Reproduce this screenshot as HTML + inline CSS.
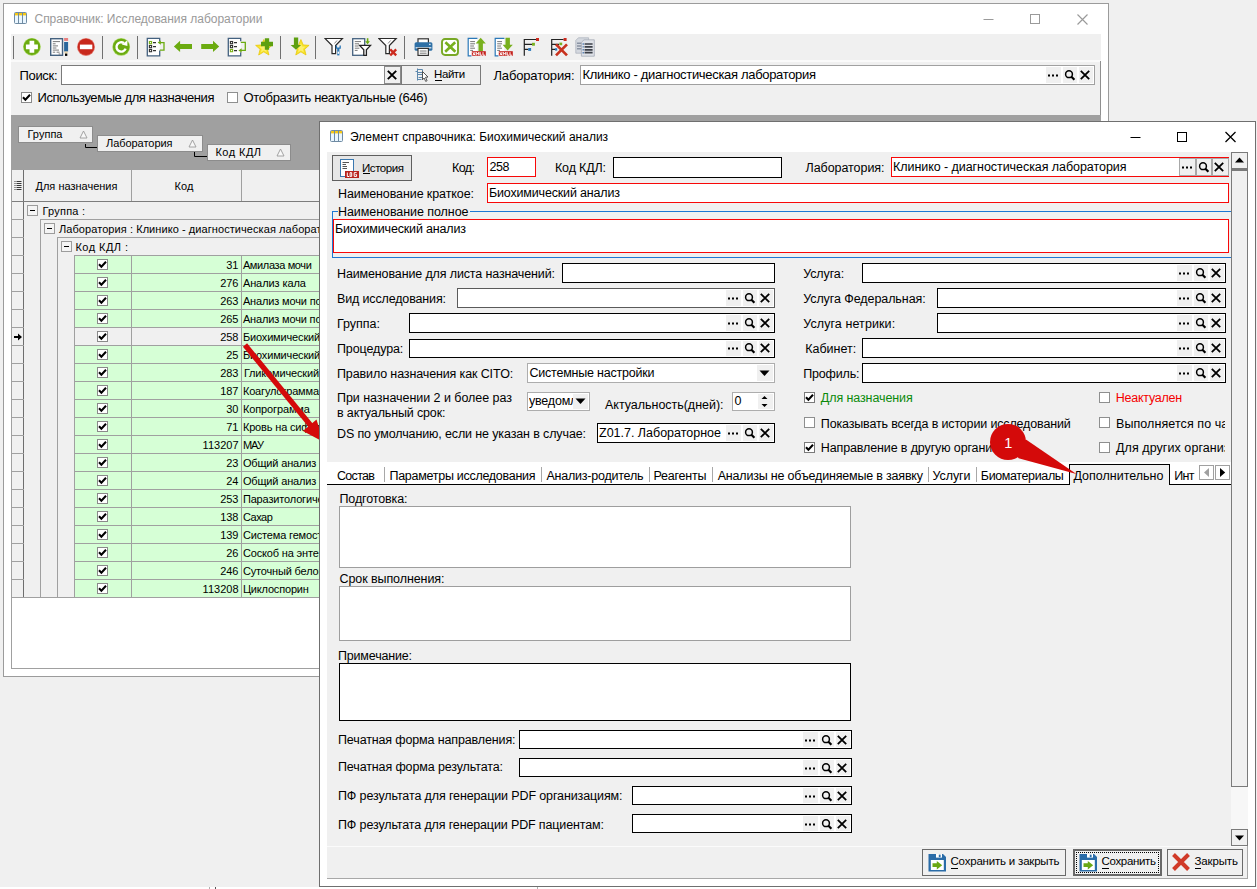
<!DOCTYPE html>
<html><head><meta charset="utf-8"><title>UI</title>
<style>
html,body{margin:0;padding:0;}
body{width:1257px;height:889px;overflow:hidden;background:#f0f0f0;font-family:"Liberation Sans",sans-serif;}
#root{position:relative;width:1257px;height:889px;overflow:hidden;background:#f0f0f0;}
#root div,#root span,#root svg{position:absolute;box-sizing:border-box;}
#root span{white-space:pre;}
#w1{left:0;top:0;width:1257px;height:889px;}
#w2{left:0;top:0;width:1257px;height:889px;}

</style></head>
<body>
<div id="root">
<div id="w1">
<div style="left:3px;top:3px;width:1106px;height:674px;background:#fff;border:1px solid #9b9b9b;"></div>
<div style="left:11px;top:34px;width:1090px;height:635px;background:#f0f0f0;"></div>
<svg style="left:14px;top:12px" width="13" height="12" viewBox="0 0 13 12">
<rect x="0.5" y="0.5" width="12" height="11" rx="1" fill="#eaf6ff" stroke="#6f8ba3"/>
<rect x="1" y="1" width="11" height="2.4" fill="#f7c815"/>
<path d="M4.5 0.5V11.5M8.5 0.5V11.5" stroke="#6f8ba3"/>
</svg>
<svg style="left:980px;top:10px" width="112" height="18" viewBox="0 0 112 18">
<g stroke="#9a9a9a" fill="none" stroke-width="1">
<path d="M3.5 9.5H13.5"/>
<rect x="50.5" y="4.5" width="9" height="9"/>
<path d="M97.5 4.5L107.5 14.5M107.5 4.5L97.5 14.5" stroke-width="1.15"/>
</g></svg>
<div style="left:13px;top:36px;width:1.2px;height:23px;background:#707070;"></div>
<div style="left:102px;top:36px;width:1.2px;height:23px;background:#707070;"></div>
<div style="left:137px;top:36px;width:1.2px;height:23px;background:#707070;"></div>
<div style="left:280px;top:36px;width:1.2px;height:23px;background:#707070;"></div>
<div style="left:315px;top:36px;width:1.2px;height:23px;background:#707070;"></div>
<div style="left:404px;top:36px;width:1.2px;height:23px;background:#707070;"></div>
<svg style="left:22px;top:37px" width="21" height="21" viewBox="0 0 21 21"><circle cx="9.9" cy="9.8" r="8.9" fill="#a4d45a"/><circle cx="9.9" cy="9.8" r="8.2" fill="#6bab10"/><path d="M9.9 3.8V15.8M3.9 9.8H15.9" stroke="#fff" stroke-width="4.7"/></svg>
<svg style="left:48.6px;top:37px" width="21" height="21" viewBox="0 0 21 21"><rect x="1.7" y="1.7" width="11.8" height="16.6" fill="#fff" stroke="#44617f" stroke-width="1.4"/><path d="M3.8 4.6H11M3.8 6.8H6.6M3.8 8.9H9M3.8 11H7.4M3.8 13.1H10M3.8 15.2H6.2M7.6 15.2H10.6M9.6 17H11.4" stroke="#6a6a6a" stroke-width="0.9"/><rect x="15.1" y="1" width="4" height="2.9" fill="#e87f7f"/><rect x="15.1" y="5" width="4" height="9.6" fill="#2b679c"/><path d="M15.1 14.6h4l-0.9 2.2h-2.2z" fill="#e8d3a8"/><rect x="16" y="16.6" width="2.3" height="2.3" fill="#000"/></svg>
<svg style="left:76px;top:37px" width="21" height="21" viewBox="0 0 21 21"><circle cx="10" cy="9.9" r="9" fill="#e2766c"/><circle cx="10" cy="9.9" r="8.2" fill="#c8281c"/><rect x="3.9" y="7.6" width="12.4" height="4.6" fill="#fff"/></svg>
<svg style="left:111px;top:37px" width="21" height="21" viewBox="0 0 21 21"><circle cx="10.2" cy="9.9" r="8.9" fill="#a4d45a"/><circle cx="10.2" cy="9.9" r="8.2" fill="#6bab10"/><path d="M14.6 11.6A4.7 4.7 0 1 1 12.9 6.1" stroke="#fff" stroke-width="2.4" fill="none"/><path d="M10.8 7.6l5.6 1.4V3.2z" fill="#fff"/></svg>
<svg style="left:146px;top:37px" width="21" height="21" viewBox="0 0 21 21"><rect x="1.3" y="1.4" width="12.4" height="17.4" fill="#fff"/><path d="M13.7 4.6V1.4H1.3v17.4h12.4v-5.2" fill="none" stroke="#44617f" stroke-width="1.3"/><path d="M7 5.6h3M7 9.6h3M7 13.6h3" stroke="#333" stroke-width="1.2"/><rect x="3.4" y="4.5" width="2.2" height="2.2" fill="#fff" stroke="#7ab317" stroke-width="1.1"/><rect x="3.4" y="8.5" width="2.2" height="2.2" fill="#fff" stroke="#333" stroke-width="1.1"/><rect x="3.4" y="12.5" width="2.2" height="2.2" fill="#fff" stroke="#333" stroke-width="1.1"/><path d="M13.8 13.2H18V5.6H14" stroke="#6bab10" fill="none" stroke-width="1.3"/><path d="M11.6 5.6l3.2-2.2v4.4z" fill="#6bab10"/></svg>
<svg style="left:173px;top:37px" width="21" height="21" viewBox="0 0 21 21"><path d="M0.9 9.4L7.1 3.7V6.9H19V11.9H7.1V15.1z" fill="#6bab10"/></svg>
<svg style="left:200px;top:37px" width="21" height="21" viewBox="0 0 21 21"><path d="M19.2 9.4L13 3.7V6.9H1.2V11.9H13V15.1z" fill="#6bab10"/></svg>
<svg style="left:226.8px;top:37px" width="21" height="21" viewBox="0 0 21 21"><rect x="1.3" y="1.4" width="12.4" height="17.4" fill="#fff"/><path d="M13.7 4.2V1.4H1.3v17.4h12.4v-3.6" fill="none" stroke="#44617f" stroke-width="1.3"/><path d="M7 5.6h3M7 9.6h3M7 13.6h3" stroke="#333" stroke-width="1.2"/><rect x="3.4" y="4.5" width="2.2" height="2.2" fill="#fff" stroke="#333" stroke-width="1.1"/><rect x="3.4" y="8.5" width="2.2" height="2.2" fill="#fff" stroke="#333" stroke-width="1.1"/><rect x="3.4" y="12.5" width="2.2" height="2.2" fill="#fff" stroke="#7ab317" stroke-width="1.1"/><path d="M13.8 5.4H18.3V13.4H14" stroke="#6bab10" fill="none" stroke-width="1.3"/><path d="M11.4 13.4l3.2-2.2v4.4z" fill="#6bab10"/></svg>
<svg style="left:254px;top:37px" width="21" height="21" viewBox="0 0 21 21"><path d="M0 -9.2L2.6 -3.2 9.1 -2.7 4.1 1.6 5.7 8 0 4.5 -5.7 8 -4.1 1.6 -9.1 -2.7 -2.6 -3.2z" transform="translate(9.8 10.8) scale(0.9)" fill="#f7e32a" stroke="#e8c400" stroke-width="0.8"/><path d="M0 -9.2L2.6 -3.2 9.1 -2.7 4.1 1.6 5.7 8 0 4.5 -5.7 8 -4.1 1.6 -9.1 -2.7 -2.6 -3.2z" transform="translate(9.8 11.2) scale(0.5)" fill="#fff58a" opacity="0.7"/><path d="M13 1.3V12.8M7 7H19" stroke="#5da011" stroke-width="4.3"/></svg>
<svg style="left:288.5px;top:37px" width="21" height="21" viewBox="0 0 21 21"><path d="M0 -9.2L2.6 -3.2 9.1 -2.7 4.1 1.6 5.7 8 0 4.5 -5.7 8 -4.1 1.6 -9.1 -2.7 -2.6 -3.2z" transform="translate(11.9 10.8) scale(0.9)" fill="#f7e32a" stroke="#e8c400" stroke-width="0.8"/><path d="M0 -9.2L2.6 -3.2 9.1 -2.7 4.1 1.6 5.7 8 0 4.5 -5.7 8 -4.1 1.6 -9.1 -2.7 -2.6 -3.2z" transform="translate(11.9 11.2) scale(0.5)" fill="#fff58a" opacity="0.7"/><path d="M4.9 0.6h4.3V8h2.9L7 12.8 1.6 8h3.3z" fill="#5da011"/></svg>
<svg style="left:324.4px;top:37px" width="21" height="21" viewBox="0 0 21 21"><path d="M1.4 1.5h17.4l-6.8 7V16.6h-3.6V8.5z" transform="translate(-0.4 0)" fill="#fff" stroke="#2a2a2a" stroke-width="1.2"/><path d="M13 3.5l-2.6 3" stroke="#888" stroke-width="1"/><path d="M14.3 11v7.4" stroke="#2b78b8" stroke-width="2.2"/><path d="M12.4 8.6v2.6h3.8V8.6" stroke="#2b78b8" fill="none" stroke-width="1.3"/><rect x="13.6" y="14.6" width="1.4" height="2.2" fill="#fff"/></svg>
<svg style="left:350.6px;top:37px" width="21" height="21" viewBox="0 0 21 21"><rect x="1.7" y="1.7" width="12" height="16.6" fill="#fff" stroke="#44617f" stroke-width="1.3"/><path d="M3.8 4.6H10M3.8 6.8H8M3.8 9H7.5M3.8 11.2H8.4M3.8 13.4H6.6" stroke="#6a6a6a" stroke-width="0.9"/><path d="M8.6 8.4h11l-4.2 4.4V18.4h-2.6V12.8z" fill="#fff" stroke="#222" stroke-width="1.3"/><path d="M16.6 1.2V5" stroke="#6bab10" stroke-width="1.6"/><path d="M14.2 4.2h4.8l-2.4 3z" fill="#6bab10"/></svg>
<svg style="left:378.2px;top:37px" width="21" height="21" viewBox="0 0 21 21"><path d="M1.4 1.5h17.4l-6.8 7V16.6h-3.6V8.5z" transform="translate(-0.6 0)" fill="#fff" stroke="#2a2a2a" stroke-width="1.2"/><path d="M12.6 3.5l-2.6 3" stroke="#888" stroke-width="1"/><path d="M12.2 12.4l6 6M18.2 12.4l-6 6" stroke="#cc2a1e" stroke-width="2.3"/></svg>
<svg style="left:412.5px;top:37px" width="21" height="21" viewBox="0 0 21 21"><rect x="5" y="1.8" width="10.4" height="5" fill="#fff" stroke="#333" stroke-width="1.2"/><rect x="1.6" y="5.2" width="17.8" height="8.6" rx="1.6" fill="#2e70a6"/><rect x="2.6" y="10.2" width="15.8" height="1.2" fill="#e8f0f8"/><rect x="16.2" y="6.8" width="1.3" height="1.3" fill="#fff"/><rect x="5" y="11.4" width="10.4" height="7" fill="#fff" stroke="#333" stroke-width="1.2"/><path d="M6.8 14h6.8M6.8 16.2h6.8" stroke="#666" stroke-width="0.9"/></svg>
<svg style="left:440px;top:37px" width="21" height="21" viewBox="0 0 21 21"><rect x="2" y="2" width="16" height="16" rx="3" fill="#fff" stroke="#78a826" stroke-width="1.9"/><path d="M5.4 5.2l10 9.6M15.2 5.2L5.2 14.8" stroke="#78b01e" stroke-width="2.6"/></svg>
<svg style="left:467.2px;top:37px" width="21" height="21" viewBox="0 0 21 21"><path d="M1.2 1.4h9v17.4h-9z" fill="#fff"/><path d="M10.4 1.4H1.2v17.4H4.4" fill="none" stroke="#2b78b8" stroke-width="1.2"/><path d="M3.2 4.6H8M3.2 6.8H8M3.2 9H7M3.2 11.2H8M3.2 13.4H6" stroke="#666" stroke-width="0.9"/><path d="M13.7 0.8l5.1 5.8h-2.9v7.6h-4.4V6.6h-2.9z" fill="#78b01e"/><rect x="4.8" y="14.2" width="14" height="4.6" fill="#c4211c"/><path d="M5.8 15.2l2.2 3M8 15.2l-2.2 3M9.2 18.3v-3l1.3 1.8 1.3-1.8v3M13.2 15.2v3h2" stroke="#fff" stroke-width="1" fill="none"/><path d="M16 15.2v3h2" stroke="#fff" stroke-width="1" fill="none"/></svg>
<svg style="left:494px;top:37px" width="21" height="21" viewBox="0 0 21 21"><path d="M1.2 1.4h9v17.4h-9z" fill="#fff"/><path d="M10.4 1.4H1.2v17.4H4.4" fill="none" stroke="#2b78b8" stroke-width="1.2"/><path d="M3.2 4.6H8M3.2 6.8H8M3.2 9H7M3.2 11.2H8M3.2 13.4H6" stroke="#666" stroke-width="0.9"/><path d="M13.7 13.4l5.1-5.6h-2.9V0.8h-4.4v7h-2.9z" fill="#78b01e"/><rect x="4.8" y="14.2" width="14" height="4.6" fill="#c4211c"/><path d="M5.8 15.2l2.2 3M8 15.2l-2.2 3M9.2 18.3v-3l1.3 1.8 1.3-1.8v3M13.2 15.2v3h2" stroke="#fff" stroke-width="1" fill="none"/><path d="M16 15.2v3h2" stroke="#fff" stroke-width="1" fill="none"/></svg>
<svg style="left:521px;top:37px" width="21" height="21" viewBox="0 0 21 21"><path d="M3.3 18.8V2.5H15M3.3 7.3H11M3.3 12.4H7.4" stroke="#222" fill="none" stroke-width="1.2"/><rect x="15" y="1" width="3" height="3" fill="#cc2a1e"/><rect x="11" y="5.8" width="2.9" height="2.9" fill="#78b01e"/><rect x="7.2" y="11" width="2.9" height="2.9" fill="#2b78b8"/></svg>
<svg style="left:548.5px;top:37px" width="21" height="21" viewBox="0 0 21 21"><path d="M2.7 18.8V2.5H14.6M2.7 7.3H10M2.7 12.4H6" stroke="#222" fill="none" stroke-width="1.2"/><rect x="14.6" y="1" width="3" height="3" fill="#cc2a1e"/><rect x="10.4" y="5.6" width="2.8" height="2.6" fill="#78b01e"/><rect x="6" y="11.2" width="2.2" height="2.4" fill="#2b78b8"/><path d="M7 7.4l11 11M18 7.4l-11 11" stroke="#c8321e" stroke-width="2.7"/></svg>
<svg style="left:575px;top:37px" width="21" height="21" viewBox="0 0 21 21"><path d="M0.8 3.4l2.6-2.6h10.2v15.4H0.8z" fill="#d4d8df" stroke="#aeb4be" stroke-width="0.8"/><path d="M2 6.2h5M2 9h5M2 11.8h5" stroke="#8a93a3" stroke-width="1.4"/><path d="M6.4 5.4l2.6-2.6h10.3v16.4H6.4z" fill="#dfe2e8" stroke="#a4abb6" stroke-width="0.8"/><path d="M9.6 7h8M9.6 9.9h8M9.6 12.8h8M9.6 15.7h8" stroke="#3c4048" stroke-width="1.7"/><path d="M7.6 7h1.2M7.6 9.9h1.2M7.6 12.8h1.2M7.6 15.7h1.2" stroke="#3f6fa8" stroke-width="1.4"/></svg>
<div style="left:11px;top:60px;width:1090px;height:2px;background:#fafafa;"></div>
<div style="left:1100px;top:61px;width:1px;height:608px;background:#8f8f8f;"></div>
<div style="left:61px;top:65px;width:341px;height:20px;background:#fff;border:1px solid #7a7a7a;"></div>
<div style="left:384px;top:66px;width:17px;height:18px;background:#f0f0f0;border:1px solid #8a8a8a;"></div>
<svg style="left:387px;top:70px" width="10" height="10" viewBox="0 0 10 10"><path d="M0.8 0.8l8.4 8.4M9.2 0.8l-8.4 8.4" stroke="#000" stroke-width="1.9"/></svg>
<div style="left:401px;top:65px;width:80px;height:20px;background:#f0f0f0;border:1px solid #7a7a7a;"></div>
<svg style="left:414px;top:67px" width="17" height="17" viewBox="0 0 17 17">
<path d="M3.5 1.5v12M1.5 4.5h2M3.5 2.5h5v3h-5M3.5 7.5h5v3h-4M3.5 12.5h4" stroke="#5f89ad" fill="none"/>
<path d="M8.5 4.5l5.5 5.5-2.5.3 1.6 3.4-1.4.7-1.6-3.4-1.6 1.8z" fill="#fff" stroke="#444" stroke-width="0.9"/></svg>
<div style="left:435px;top:80px;width:7px;height:1px;background:#000;"></div>
<div style="left:580px;top:65px;width:515px;height:20px;background:#fff;border:1px solid #a0a0a0;"></div>
<div style="left:1046px;top:67px;width:15px;height:16px;background:#f0f0f0;"></div>
<div style="left:1063px;top:67px;width:14px;height:16px;background:#f0f0f0;"></div>
<div style="left:1079px;top:67px;width:14px;height:16px;background:#f0f0f0;"></div>
<svg style="left:1046px;top:67.0px" width="46" height="16" viewBox="0 0 46 16"><path d="M2 8.5h2M6 8.5h2M10 8.5h2" stroke="#000" stroke-width="2"/><circle cx="23" cy="7.2" r="3.4" fill="none" stroke="#000" stroke-width="1.5"/><path d="M25.4 9.8l3 3" stroke="#000" stroke-width="2.2"/><path d="M34.8 3.8l8.4 8.4M43.2 3.8l-8.4 8.4" stroke="#000" stroke-width="1.8"/></svg>
<div style="left:21px;top:92px;width:11px;height:11px;background:#fff;border:1px solid #8a8a8a;"></div>
<svg style="left:21px;top:92px" width="11" height="11" viewBox="0 0 11 11"><path d="M2 5.2l2.4 2.6L9 2.8" stroke="#000" stroke-width="2" fill="none"/></svg>
<div style="left:227px;top:92px;width:11px;height:11px;background:#fff;border:1px solid #8e8f8f;"></div>
<div style="left:11px;top:115px;width:1090px;height:55px;background:#a0a0a0;"></div>
<div style="left:18.4px;top:125.6px;width:74.5px;height:17.5px;background:#f0f0f0;border:1px solid #8c8c8c;"></div>
<svg style="left:78.5px;top:130.0px" width="9" height="9" viewBox="0 0 9 9"><path d="M4.5 1L8 8H1z" fill="#f8f8f8" stroke="#9a9a9a" stroke-width="0.9"/></svg>
<div style="left:97px;top:134.6px;width:105.7px;height:17.5px;background:#f0f0f0;border:1px solid #8c8c8c;"></div>
<svg style="left:188px;top:139.0px" width="9" height="9" viewBox="0 0 9 9"><path d="M4.5 1L8 8H1z" fill="#f8f8f8" stroke="#9a9a9a" stroke-width="0.9"/></svg>
<div style="left:207px;top:143.5px;width:83.5px;height:17.5px;background:#f0f0f0;border:1px solid #8c8c8c;"></div>
<svg style="left:276px;top:147.9px" width="9" height="9" viewBox="0 0 9 9"><path d="M4.5 1L8 8H1z" fill="#f8f8f8" stroke="#9a9a9a" stroke-width="0.9"/></svg>
<svg style="left:80px;top:140px" width="130" height="22" viewBox="0 0 130 22"><path d="M5.5 4V7.5H17M114.5 12V16.5H127" stroke="#000" fill="none"/></svg>
<div style="left:11px;top:170px;width:1090px;height:499px;background:#fff;border:1px solid #a0a0a0;"></div>
<div style="left:12px;top:170px;width:1088px;height:32px;background:#f0f0f0;border-bottom:1px solid #7d7d7d;"></div>
<div style="left:23px;top:170px;width:1px;height:31px;background:#6e6e6e;"></div>
<div style="left:131px;top:170px;width:1px;height:31px;background:#a0a0a0;"></div>
<div style="left:241px;top:170px;width:1px;height:31px;background:#a0a0a0;"></div>
<svg style="left:14px;top:181px" width="8" height="10" viewBox="0 0 8 10"><path d="M0.5 0.5h1M2.5 0.5h5M0.5 2.5h1M2.5 2.5h5M0.5 4.5h1M2.5 4.5h5M0.5 6.5h1M2.5 6.5h5M0.5 8.5h1M2.5 8.5h5" stroke="#222" stroke-width="0.9"/></svg>
<div style="left:12px;top:202px;width:11px;height:396px;background:#f0f0f0;"></div>
<div style="left:23px;top:202px;width:1px;height:396px;background:#6e6e6e;"></div>
<div style="left:24px;top:202px;width:1076px;height:396px;background:#f0f0f0;"></div>
<div style="left:12px;top:219px;width:12px;height:1px;background:#a0a0a0;"></div>
<div style="left:12px;top:237px;width:12px;height:1px;background:#a0a0a0;"></div>
<div style="left:12px;top:255px;width:12px;height:1px;background:#a0a0a0;"></div>
<div style="left:12px;top:273px;width:12px;height:1px;background:#a0a0a0;"></div>
<div style="left:12px;top:291px;width:12px;height:1px;background:#a0a0a0;"></div>
<div style="left:12px;top:309px;width:12px;height:1px;background:#a0a0a0;"></div>
<div style="left:12px;top:327px;width:12px;height:1px;background:#a0a0a0;"></div>
<div style="left:12px;top:345px;width:12px;height:1px;background:#a0a0a0;"></div>
<div style="left:12px;top:363px;width:12px;height:1px;background:#a0a0a0;"></div>
<div style="left:12px;top:381px;width:12px;height:1px;background:#a0a0a0;"></div>
<div style="left:12px;top:399px;width:12px;height:1px;background:#a0a0a0;"></div>
<div style="left:12px;top:417px;width:12px;height:1px;background:#a0a0a0;"></div>
<div style="left:12px;top:435px;width:12px;height:1px;background:#a0a0a0;"></div>
<div style="left:12px;top:453px;width:12px;height:1px;background:#a0a0a0;"></div>
<div style="left:12px;top:471px;width:12px;height:1px;background:#a0a0a0;"></div>
<div style="left:12px;top:489px;width:12px;height:1px;background:#a0a0a0;"></div>
<div style="left:12px;top:507px;width:12px;height:1px;background:#a0a0a0;"></div>
<div style="left:12px;top:525px;width:12px;height:1px;background:#a0a0a0;"></div>
<div style="left:12px;top:543px;width:12px;height:1px;background:#a0a0a0;"></div>
<div style="left:12px;top:561px;width:12px;height:1px;background:#a0a0a0;"></div>
<div style="left:12px;top:579px;width:12px;height:1px;background:#a0a0a0;"></div>
<div style="left:12px;top:597px;width:12px;height:1px;background:#a0a0a0;"></div>
<div style="left:40px;top:219px;width:1060px;height:379px;border-left:1px solid #a0a0a0;border-top:1px solid #a0a0a0;"></div>
<div style="left:57px;top:237px;width:1043px;height:361px;border-left:1px solid #a0a0a0;border-top:1px solid #a0a0a0;"></div>
<div style="left:11px;top:597px;width:1090px;height:1px;background:#a0a0a0;"></div>
<div style="left:27px;top:205px;width:11px;height:11px;background:#f4f4f4;border:1px solid #9c9c9c;"></div>
<div style="left:30px;top:210px;width:5px;height:1px;background:#000;"></div>
<div style="left:44px;top:223px;width:11px;height:11px;background:#f4f4f4;border:1px solid #9c9c9c;"></div>
<div style="left:47px;top:228px;width:5px;height:1px;background:#000;"></div>
<div style="left:61px;top:241px;width:11px;height:11px;background:#f4f4f4;border:1px solid #9c9c9c;"></div>
<div style="left:64px;top:246px;width:5px;height:1px;background:#000;"></div>
<div style="left:74px;top:255px;width:1026px;height:19px;background:#d6ffd6;border:1px solid #a0a0a0;border-right:none;"></div>
<div style="left:131px;top:256px;width:1px;height:17px;background:#a0a0a0;"></div>
<div style="left:241px;top:256px;width:1px;height:17px;background:#a0a0a0;"></div>
<div style="left:97px;top:259px;width:11px;height:11px;background:#fff;border:1px solid #8a8a8a;"></div>
<svg style="left:97px;top:259px" width="11" height="11" viewBox="0 0 11 11"><path d="M2 5.2l2.4 2.6L9 2.8" stroke="#000" stroke-width="2" fill="none"/></svg>
<div style="left:74px;top:273px;width:1026px;height:19px;background:#d6ffd6;border:1px solid #a0a0a0;border-right:none;"></div>
<div style="left:131px;top:274px;width:1px;height:17px;background:#a0a0a0;"></div>
<div style="left:241px;top:274px;width:1px;height:17px;background:#a0a0a0;"></div>
<div style="left:97px;top:277px;width:11px;height:11px;background:#fff;border:1px solid #8a8a8a;"></div>
<svg style="left:97px;top:277px" width="11" height="11" viewBox="0 0 11 11"><path d="M2 5.2l2.4 2.6L9 2.8" stroke="#000" stroke-width="2" fill="none"/></svg>
<div style="left:74px;top:291px;width:1026px;height:19px;background:#d6ffd6;border:1px solid #a0a0a0;border-right:none;"></div>
<div style="left:131px;top:292px;width:1px;height:17px;background:#a0a0a0;"></div>
<div style="left:241px;top:292px;width:1px;height:17px;background:#a0a0a0;"></div>
<div style="left:97px;top:295px;width:11px;height:11px;background:#fff;border:1px solid #8a8a8a;"></div>
<svg style="left:97px;top:295px" width="11" height="11" viewBox="0 0 11 11"><path d="M2 5.2l2.4 2.6L9 2.8" stroke="#000" stroke-width="2" fill="none"/></svg>
<div style="left:74px;top:309px;width:1026px;height:19px;background:#d6ffd6;border:1px solid #a0a0a0;border-right:none;"></div>
<div style="left:131px;top:310px;width:1px;height:17px;background:#a0a0a0;"></div>
<div style="left:241px;top:310px;width:1px;height:17px;background:#a0a0a0;"></div>
<div style="left:97px;top:313px;width:11px;height:11px;background:#fff;border:1px solid #8a8a8a;"></div>
<svg style="left:97px;top:313px" width="11" height="11" viewBox="0 0 11 11"><path d="M2 5.2l2.4 2.6L9 2.8" stroke="#000" stroke-width="2" fill="none"/></svg>
<div style="left:74px;top:327px;width:1026px;height:19px;background:#d6ffd6;border:1px solid #a0a0a0;border-right:none;"></div>
<div style="left:75px;top:328px;width:166px;height:17px;background:#f0f0f0;"></div>
<div style="left:131px;top:328px;width:1px;height:17px;background:#a0a0a0;"></div>
<div style="left:241px;top:328px;width:1px;height:17px;background:#a0a0a0;"></div>
<div style="left:97px;top:331px;width:11px;height:11px;background:#fff;border:1px solid #8a8a8a;"></div>
<svg style="left:97px;top:331px" width="11" height="11" viewBox="0 0 11 11"><path d="M2 5.2l2.4 2.6L9 2.8" stroke="#000" stroke-width="2" fill="none"/></svg>
<div style="left:74px;top:345px;width:1026px;height:19px;background:#d6ffd6;border:1px solid #a0a0a0;border-right:none;"></div>
<div style="left:131px;top:346px;width:1px;height:17px;background:#a0a0a0;"></div>
<div style="left:241px;top:346px;width:1px;height:17px;background:#a0a0a0;"></div>
<div style="left:97px;top:349px;width:11px;height:11px;background:#fff;border:1px solid #8a8a8a;"></div>
<svg style="left:97px;top:349px" width="11" height="11" viewBox="0 0 11 11"><path d="M2 5.2l2.4 2.6L9 2.8" stroke="#000" stroke-width="2" fill="none"/></svg>
<div style="left:74px;top:363px;width:1026px;height:19px;background:#d6ffd6;border:1px solid #a0a0a0;border-right:none;"></div>
<div style="left:131px;top:364px;width:1px;height:17px;background:#a0a0a0;"></div>
<div style="left:241px;top:364px;width:1px;height:17px;background:#a0a0a0;"></div>
<div style="left:97px;top:367px;width:11px;height:11px;background:#fff;border:1px solid #8a8a8a;"></div>
<svg style="left:97px;top:367px" width="11" height="11" viewBox="0 0 11 11"><path d="M2 5.2l2.4 2.6L9 2.8" stroke="#000" stroke-width="2" fill="none"/></svg>
<div style="left:74px;top:381px;width:1026px;height:19px;background:#d6ffd6;border:1px solid #a0a0a0;border-right:none;"></div>
<div style="left:131px;top:382px;width:1px;height:17px;background:#a0a0a0;"></div>
<div style="left:241px;top:382px;width:1px;height:17px;background:#a0a0a0;"></div>
<div style="left:97px;top:385px;width:11px;height:11px;background:#fff;border:1px solid #8a8a8a;"></div>
<svg style="left:97px;top:385px" width="11" height="11" viewBox="0 0 11 11"><path d="M2 5.2l2.4 2.6L9 2.8" stroke="#000" stroke-width="2" fill="none"/></svg>
<div style="left:74px;top:399px;width:1026px;height:19px;background:#d6ffd6;border:1px solid #a0a0a0;border-right:none;"></div>
<div style="left:131px;top:400px;width:1px;height:17px;background:#a0a0a0;"></div>
<div style="left:241px;top:400px;width:1px;height:17px;background:#a0a0a0;"></div>
<div style="left:97px;top:403px;width:11px;height:11px;background:#fff;border:1px solid #8a8a8a;"></div>
<svg style="left:97px;top:403px" width="11" height="11" viewBox="0 0 11 11"><path d="M2 5.2l2.4 2.6L9 2.8" stroke="#000" stroke-width="2" fill="none"/></svg>
<div style="left:74px;top:417px;width:1026px;height:19px;background:#d6ffd6;border:1px solid #a0a0a0;border-right:none;"></div>
<div style="left:131px;top:418px;width:1px;height:17px;background:#a0a0a0;"></div>
<div style="left:241px;top:418px;width:1px;height:17px;background:#a0a0a0;"></div>
<div style="left:97px;top:421px;width:11px;height:11px;background:#fff;border:1px solid #8a8a8a;"></div>
<svg style="left:97px;top:421px" width="11" height="11" viewBox="0 0 11 11"><path d="M2 5.2l2.4 2.6L9 2.8" stroke="#000" stroke-width="2" fill="none"/></svg>
<div style="left:74px;top:435px;width:1026px;height:19px;background:#d6ffd6;border:1px solid #a0a0a0;border-right:none;"></div>
<div style="left:131px;top:436px;width:1px;height:17px;background:#a0a0a0;"></div>
<div style="left:241px;top:436px;width:1px;height:17px;background:#a0a0a0;"></div>
<div style="left:97px;top:439px;width:11px;height:11px;background:#fff;border:1px solid #8a8a8a;"></div>
<svg style="left:97px;top:439px" width="11" height="11" viewBox="0 0 11 11"><path d="M2 5.2l2.4 2.6L9 2.8" stroke="#000" stroke-width="2" fill="none"/></svg>
<div style="left:74px;top:453px;width:1026px;height:19px;background:#d6ffd6;border:1px solid #a0a0a0;border-right:none;"></div>
<div style="left:131px;top:454px;width:1px;height:17px;background:#a0a0a0;"></div>
<div style="left:241px;top:454px;width:1px;height:17px;background:#a0a0a0;"></div>
<div style="left:97px;top:457px;width:11px;height:11px;background:#fff;border:1px solid #8a8a8a;"></div>
<svg style="left:97px;top:457px" width="11" height="11" viewBox="0 0 11 11"><path d="M2 5.2l2.4 2.6L9 2.8" stroke="#000" stroke-width="2" fill="none"/></svg>
<div style="left:74px;top:471px;width:1026px;height:19px;background:#d6ffd6;border:1px solid #a0a0a0;border-right:none;"></div>
<div style="left:131px;top:472px;width:1px;height:17px;background:#a0a0a0;"></div>
<div style="left:241px;top:472px;width:1px;height:17px;background:#a0a0a0;"></div>
<div style="left:97px;top:475px;width:11px;height:11px;background:#fff;border:1px solid #8a8a8a;"></div>
<svg style="left:97px;top:475px" width="11" height="11" viewBox="0 0 11 11"><path d="M2 5.2l2.4 2.6L9 2.8" stroke="#000" stroke-width="2" fill="none"/></svg>
<div style="left:74px;top:489px;width:1026px;height:19px;background:#d6ffd6;border:1px solid #a0a0a0;border-right:none;"></div>
<div style="left:131px;top:490px;width:1px;height:17px;background:#a0a0a0;"></div>
<div style="left:241px;top:490px;width:1px;height:17px;background:#a0a0a0;"></div>
<div style="left:97px;top:493px;width:11px;height:11px;background:#fff;border:1px solid #8a8a8a;"></div>
<svg style="left:97px;top:493px" width="11" height="11" viewBox="0 0 11 11"><path d="M2 5.2l2.4 2.6L9 2.8" stroke="#000" stroke-width="2" fill="none"/></svg>
<div style="left:74px;top:507px;width:1026px;height:19px;background:#d6ffd6;border:1px solid #a0a0a0;border-right:none;"></div>
<div style="left:131px;top:508px;width:1px;height:17px;background:#a0a0a0;"></div>
<div style="left:241px;top:508px;width:1px;height:17px;background:#a0a0a0;"></div>
<div style="left:97px;top:511px;width:11px;height:11px;background:#fff;border:1px solid #8a8a8a;"></div>
<svg style="left:97px;top:511px" width="11" height="11" viewBox="0 0 11 11"><path d="M2 5.2l2.4 2.6L9 2.8" stroke="#000" stroke-width="2" fill="none"/></svg>
<div style="left:74px;top:525px;width:1026px;height:19px;background:#d6ffd6;border:1px solid #a0a0a0;border-right:none;"></div>
<div style="left:131px;top:526px;width:1px;height:17px;background:#a0a0a0;"></div>
<div style="left:241px;top:526px;width:1px;height:17px;background:#a0a0a0;"></div>
<div style="left:97px;top:529px;width:11px;height:11px;background:#fff;border:1px solid #8a8a8a;"></div>
<svg style="left:97px;top:529px" width="11" height="11" viewBox="0 0 11 11"><path d="M2 5.2l2.4 2.6L9 2.8" stroke="#000" stroke-width="2" fill="none"/></svg>
<div style="left:74px;top:543px;width:1026px;height:19px;background:#d6ffd6;border:1px solid #a0a0a0;border-right:none;"></div>
<div style="left:131px;top:544px;width:1px;height:17px;background:#a0a0a0;"></div>
<div style="left:241px;top:544px;width:1px;height:17px;background:#a0a0a0;"></div>
<div style="left:97px;top:547px;width:11px;height:11px;background:#fff;border:1px solid #8a8a8a;"></div>
<svg style="left:97px;top:547px" width="11" height="11" viewBox="0 0 11 11"><path d="M2 5.2l2.4 2.6L9 2.8" stroke="#000" stroke-width="2" fill="none"/></svg>
<div style="left:74px;top:561px;width:1026px;height:19px;background:#d6ffd6;border:1px solid #a0a0a0;border-right:none;"></div>
<div style="left:131px;top:562px;width:1px;height:17px;background:#a0a0a0;"></div>
<div style="left:241px;top:562px;width:1px;height:17px;background:#a0a0a0;"></div>
<div style="left:97px;top:565px;width:11px;height:11px;background:#fff;border:1px solid #8a8a8a;"></div>
<svg style="left:97px;top:565px" width="11" height="11" viewBox="0 0 11 11"><path d="M2 5.2l2.4 2.6L9 2.8" stroke="#000" stroke-width="2" fill="none"/></svg>
<div style="left:74px;top:579px;width:1026px;height:19px;background:#d6ffd6;border:1px solid #a0a0a0;border-right:none;"></div>
<div style="left:131px;top:580px;width:1px;height:17px;background:#a0a0a0;"></div>
<div style="left:241px;top:580px;width:1px;height:17px;background:#a0a0a0;"></div>
<div style="left:97px;top:583px;width:11px;height:11px;background:#fff;border:1px solid #8a8a8a;"></div>
<svg style="left:97px;top:583px" width="11" height="11" viewBox="0 0 11 11"><path d="M2 5.2l2.4 2.6L9 2.8" stroke="#000" stroke-width="2" fill="none"/></svg>
<svg style="left:12px;top:332px" width="11" height="10" viewBox="0 0 11 10"><path d="M2 4h4V1.5L10 5 6 8.5V6H2z" fill="#000"/></svg>
<span style="left:34.50px;top:10.50px;font-size:12px;line-height:16px;letter-spacing:-0.025px;color:#9a9a9a;">Справочник: Исследования лаборатории</span>
<span style="left:19.50px;top:66.50px;font-size:13px;line-height:17px;letter-spacing:-0.328px;">Поиск:</span>
<span style="left:434.10px;top:67.25px;font-size:11.5px;line-height:15.5px;letter-spacing:-0.457px;">Найти</span>
<span style="left:493.50px;top:66.50px;font-size:13px;line-height:17px;letter-spacing:-0.163px;">Лаборатория:</span>
<span style="left:582.50px;top:66.00px;font-size:13px;line-height:17px;letter-spacing:-0.320px;">Клинико - диагностическая лаборатория</span>
<span style="left:37.50px;top:89.00px;font-size:13px;line-height:17px;letter-spacing:-0.438px;">Используемые для назначения</span>
<span style="left:243.50px;top:89.00px;font-size:13px;line-height:17px;letter-spacing:-0.347px;">Отобразить неактуальные (646)</span>
<span style="left:27.50px;top:127.40px;font-size:11px;line-height:15px;letter-spacing:0.025px;">Группа</span>
<span style="left:106.00px;top:136.40px;font-size:11px;line-height:15px;letter-spacing:-0.050px;">Лаборатория</span>
<span style="left:215.50px;top:145.30px;font-size:11px;line-height:15px;letter-spacing:0.443px;">Код КДЛ</span>
<span style="left:35.50px;top:178.80px;font-size:11px;line-height:15px;">Для назначения</span>
<span style="left:174.50px;top:178.80px;font-size:11px;line-height:15px;letter-spacing:0.148px;">Код</span>
<span style="left:42.50px;top:203.50px;font-size:11px;line-height:15px;letter-spacing:0.217px;">Группа :</span>
<span style="left:59.00px;top:221.50px;font-size:11px;line-height:15px;letter-spacing:0.070px;">Лаборатория : Клинико - диагностическая лаборатория</span>
<span style="left:75.50px;top:239.50px;font-size:11px;line-height:15px;letter-spacing:0.443px;">Код КДЛ :</span>
<span style="left:226.25px;top:257.50px;font-size:11px;line-height:15px;">31</span>
<span style="left:242.90px;top:257.50px;font-size:11px;line-height:15px;letter-spacing:-0.364px;">Амилаза мочи</span>
<span style="left:220.14px;top:275.50px;font-size:11px;line-height:15px;">276</span>
<span style="left:242.90px;top:275.50px;font-size:11px;line-height:15px;letter-spacing:-0.091px;">Анализ кала</span>
<span style="left:220.14px;top:293.50px;font-size:11px;line-height:15px;">263</span>
<span style="left:242.90px;top:293.50px;font-size:11px;line-height:15px;letter-spacing:-0.151px;">Анализ мочи по Нечипоренко</span>
<span style="left:220.14px;top:311.50px;font-size:11px;line-height:15px;">265</span>
<span style="left:242.90px;top:311.50px;font-size:11px;line-height:15px;letter-spacing:-0.153px;">Анализ мочи по Зимницкому</span>
<span style="left:220.14px;top:329.50px;font-size:11px;line-height:15px;">258</span>
<span style="left:242.90px;top:329.50px;font-size:11px;line-height:15px;letter-spacing:-0.155px;">Биохимический анализ</span>
<span style="left:226.25px;top:347.50px;font-size:11px;line-height:15px;">25</span>
<span style="left:242.90px;top:347.50px;font-size:11px;line-height:15px;letter-spacing:-0.150px;">Биохимический анализ крови</span>
<span style="left:220.14px;top:365.50px;font-size:11px;line-height:15px;">283</span>
<span style="left:243.90px;top:365.50px;font-size:11px;line-height:15px;letter-spacing:-0.157px;">Гликемический профиль</span>
<span style="left:220.14px;top:383.50px;font-size:11px;line-height:15px;">187</span>
<span style="left:242.90px;top:383.50px;font-size:11px;line-height:15px;letter-spacing:-0.163px;">Коагулограмма</span>
<span style="left:226.25px;top:401.50px;font-size:11px;line-height:15px;">30</span>
<span style="left:242.90px;top:401.50px;font-size:11px;line-height:15px;letter-spacing:-0.122px;">Копрограмма</span>
<span style="left:226.25px;top:419.50px;font-size:11px;line-height:15px;">71</span>
<span style="left:242.90px;top:419.50px;font-size:11px;line-height:15px;letter-spacing:-0.156px;">Кровь на сифилис</span>
<span style="left:202.61px;top:437.50px;font-size:11px;line-height:15px;">113207</span>
<span style="left:242.90px;top:437.50px;font-size:11px;line-height:15px;letter-spacing:-1.008px;">МАУ</span>
<span style="left:226.25px;top:455.50px;font-size:11px;line-height:15px;">23</span>
<span style="left:242.90px;top:455.50px;font-size:11px;line-height:15px;letter-spacing:-0.158px;">Общий анализ крови</span>
<span style="left:226.25px;top:473.50px;font-size:11px;line-height:15px;">24</span>
<span style="left:242.90px;top:473.50px;font-size:11px;line-height:15px;letter-spacing:-0.162px;">Общий анализ мочи</span>
<span style="left:220.14px;top:491.50px;font-size:11px;line-height:15px;">253</span>
<span style="left:242.90px;top:491.50px;font-size:11px;line-height:15px;letter-spacing:-0.155px;">Паразитологическое</span>
<span style="left:220.14px;top:509.50px;font-size:11px;line-height:15px;">138</span>
<span style="left:242.90px;top:509.50px;font-size:11px;line-height:15px;letter-spacing:-0.449px;">Сахар</span>
<span style="left:220.14px;top:527.50px;font-size:11px;line-height:15px;">139</span>
<span style="left:242.90px;top:527.50px;font-size:11px;line-height:15px;letter-spacing:-0.154px;">Система гемостаза</span>
<span style="left:226.25px;top:545.50px;font-size:11px;line-height:15px;">26</span>
<span style="left:242.90px;top:545.50px;font-size:11px;line-height:15px;letter-spacing:-0.150px;">Соскоб на энтеробиоз</span>
<span style="left:220.14px;top:563.50px;font-size:11px;line-height:15px;">246</span>
<span style="left:242.90px;top:563.50px;font-size:11px;line-height:15px;letter-spacing:-0.159px;">Суточный белок</span>
<span style="left:202.61px;top:581.50px;font-size:11px;line-height:15px;">113208</span>
<span style="left:242.90px;top:581.50px;font-size:11px;line-height:15px;letter-spacing:-0.180px;">Циклоспорин</span>
</div>
<svg style="left:0;top:0" width="1257" height="889" viewBox="0 0 1257 889">
<path d="M245 345L312 427" stroke="#d40a0a" stroke-width="5.3" fill="none"/>
<path d="M316.5 419.5L303 431L323.5 442z" fill="#d40a0a"/>
</svg>
<div id="w2">
<div style="left:319px;top:121px;width:937px;height:766px;background:#fff;border:1px solid #6f6f6f;"></div>
<div style="left:327px;top:152px;width:921px;height:727px;background:#f0f0f0;border-right:1px solid #a8a8a8;border-bottom:1px solid #a8a8a8;"></div>
<svg style="left:330px;top:130px" width="13" height="12" viewBox="0 0 13 12">
<rect x="0.5" y="0.5" width="12" height="11" rx="1" fill="#eaf6ff" stroke="#6f8ba3"/>
<rect x="1" y="1" width="11" height="2.4" fill="#f7c815"/>
<path d="M4.5 0.5V11.5M8.5 0.5V11.5" stroke="#6f8ba3"/>
</svg>
<svg style="left:1127px;top:128px" width="112" height="18" viewBox="0 0 112 18">
<g stroke="#000" fill="none" stroke-width="1">
<path d="M3.5 9.5H13.5"/>
<rect x="50.5" y="4.5" width="9" height="9"/>
<path d="M98.5 4L108.5 14M108.5 4L98.5 14" stroke-width="1.25"/>
</g></svg>
<div style="left:332px;top:155px;width:80px;height:26px;background:#e6e6e6;border:1px solid #5f5f5f;"></div>
<svg style="left:339px;top:158px" width="22" height="21" viewBox="0 0 22 21">
<rect x="1.5" y="1.5" width="13" height="17" fill="#fff" stroke="#3a78b0"/>
<path d="M3.5 4.5H10M3.5 6.5H7M3.5 8.5H8M3.5 10.5H8" stroke="#555"/>
<rect x="6" y="13" width="14" height="7" fill="#b8221c"/>
<path d="M8.3 14.5v4h2M12.5 14.6h-1.4v3.8h1.6v-3.8zM17.6 14.6h-2.4v3.8h2.4v-1.8h-1.2" stroke="#fff" stroke-width="1" fill="none"/></svg>
<div style="left:363px;top:173px;width:7px;height:1px;background:#000;"></div>
<div style="left:487px;top:157px;width:49px;height:20px;background:#fff;border:1px solid #f80808;"></div>
<div style="left:613px;top:157px;width:169px;height:21px;background:#fff;border:1px solid #000;"></div>
<div style="left:891px;top:157px;width:338px;height:20px;background:#fff;border:1px solid #f80808;"></div>
<div style="left:1179px;top:158px;width:17px;height:18px;background:#f0f0f0;border:1px solid #a8a8a8;"></div>
<div style="left:1196px;top:158px;width:16px;height:18px;background:#f0f0f0;border:1px solid #a8a8a8;"></div>
<div style="left:1212px;top:158px;width:17px;height:18px;background:#f0f0f0;border:1px solid #a8a8a8;"></div>
<svg style="left:1180px;top:159.0px" width="46" height="16" viewBox="0 0 46 16"><path d="M2 8.5h2M6 8.5h2M10 8.5h2" stroke="#000" stroke-width="2"/><circle cx="23" cy="7.2" r="3.4" fill="none" stroke="#000" stroke-width="1.5"/><path d="M25.4 9.8l3 3" stroke="#000" stroke-width="2.2"/><path d="M34.8 3.8l8.4 8.4M43.2 3.8l-8.4 8.4" stroke="#000" stroke-width="1.8"/></svg>
<div style="left:487px;top:183px;width:742px;height:20px;background:#fff;border:1px solid #f80808;"></div>
<div style="left:332px;top:211px;width:900px;height:47px;border:1px solid #1e78d2;border-right:none;"></div>
<div style="left:338px;top:205px;width:132px;height:12px;background:#f0f0f0;"></div>
<div style="left:333px;top:219px;width:896px;height:34px;background:#fff;border:1px solid #f80808;"></div>
<div style="left:562px;top:263px;width:213px;height:20px;background:#fff;border:1px solid #000;"></div>
<div style="left:457px;top:288px;width:318px;height:20px;background:#fff;border:1px solid #5a5a5a;"></div>
<div style="left:726px;top:290px;width:15px;height:16px;background:#f0f0f0;"></div>
<div style="left:743px;top:290px;width:14px;height:16px;background:#f0f0f0;"></div>
<div style="left:759px;top:290px;width:14px;height:16px;background:#f0f0f0;"></div>
<svg style="left:726px;top:290.0px" width="46" height="16" viewBox="0 0 46 16"><path d="M2 8.5h2M6 8.5h2M10 8.5h2" stroke="#000" stroke-width="2"/><circle cx="23" cy="7.2" r="3.4" fill="none" stroke="#000" stroke-width="1.5"/><path d="M25.4 9.8l3 3" stroke="#000" stroke-width="2.2"/><path d="M34.8 3.8l8.4 8.4M43.2 3.8l-8.4 8.4" stroke="#000" stroke-width="1.8"/></svg>
<div style="left:409px;top:313px;width:366px;height:20px;background:#fff;border:1px solid #000;"></div>
<div style="left:726px;top:315px;width:15px;height:16px;background:#f0f0f0;"></div>
<div style="left:743px;top:315px;width:14px;height:16px;background:#f0f0f0;"></div>
<div style="left:759px;top:315px;width:14px;height:16px;background:#f0f0f0;"></div>
<svg style="left:726px;top:315.0px" width="46" height="16" viewBox="0 0 46 16"><path d="M2 8.5h2M6 8.5h2M10 8.5h2" stroke="#000" stroke-width="2"/><circle cx="23" cy="7.2" r="3.4" fill="none" stroke="#000" stroke-width="1.5"/><path d="M25.4 9.8l3 3" stroke="#000" stroke-width="2.2"/><path d="M34.8 3.8l8.4 8.4M43.2 3.8l-8.4 8.4" stroke="#000" stroke-width="1.8"/></svg>
<div style="left:409px;top:338.5px;width:366px;height:19.5px;background:#fff;border:1px solid #000;"></div>
<div style="left:726px;top:340.5px;width:15px;height:15.5px;background:#f0f0f0;"></div>
<div style="left:743px;top:340.5px;width:14px;height:15.5px;background:#f0f0f0;"></div>
<div style="left:759px;top:340.5px;width:14px;height:15.5px;background:#f0f0f0;"></div>
<svg style="left:726px;top:340.25px" width="46" height="16" viewBox="0 0 46 16"><path d="M2 8.5h2M6 8.5h2M10 8.5h2" stroke="#000" stroke-width="2"/><circle cx="23" cy="7.2" r="3.4" fill="none" stroke="#000" stroke-width="1.5"/><path d="M25.4 9.8l3 3" stroke="#000" stroke-width="2.2"/><path d="M34.8 3.8l8.4 8.4M43.2 3.8l-8.4 8.4" stroke="#000" stroke-width="1.8"/></svg>
<div style="left:527px;top:363px;width:248px;height:20px;background:#fff;border:1px solid #adadad;"></div>
<div style="left:757px;top:365px;width:16px;height:16px;background:#f0f0f0;"></div>
<svg style="left:759px;top:370px" width="11" height="7" viewBox="0 0 11 7"><path d="M0.5 0.5h10L5.5 6z" fill="#000"/></svg>
<div style="left:527px;top:391.5px;width:63px;height:19.5px;background:#fff;border:1px solid #adadad;"></div>
<div style="left:573px;top:393.5px;width:15px;height:15.5px;background:#f0f0f0;"></div>
<div style="left:529px;top:393px;width:44px;height:16px;overflow:hidden"><span style="left:0;top:0;font-size:12.5px;line-height:16px;letter-spacing:-0.2px">уведомлять</span></div>
<svg style="left:575px;top:398px" width="11" height="7" viewBox="0 0 11 7"><path d="M0.5 0.5h10L5.5 6z" fill="#000"/></svg>
<div style="left:732px;top:391.5px;width:43px;height:19.5px;background:#fff;border:1px solid #adadad;"></div>
<div style="left:758px;top:393.5px;width:15px;height:15.5px;background:#f0f0f0;"></div>
<svg style="left:761px;top:395px" width="7" height="13" viewBox="0 0 7 13"><path d="M0.5 4h6L3.5 1zM0.5 9h6L3.5 12z" fill="#000"/></svg>
<div style="left:597px;top:423px;width:178px;height:20px;background:#fff;border:1px solid #000;"></div>
<div style="left:726px;top:425px;width:15px;height:16px;background:#f0f0f0;"></div>
<div style="left:743px;top:425px;width:14px;height:16px;background:#f0f0f0;"></div>
<div style="left:759px;top:425px;width:14px;height:16px;background:#f0f0f0;"></div>
<svg style="left:726px;top:425.0px" width="46" height="16" viewBox="0 0 46 16"><path d="M2 8.5h2M6 8.5h2M10 8.5h2" stroke="#000" stroke-width="2"/><circle cx="23" cy="7.2" r="3.4" fill="none" stroke="#000" stroke-width="1.5"/><path d="M25.4 9.8l3 3" stroke="#000" stroke-width="2.2"/><path d="M34.8 3.8l8.4 8.4M43.2 3.8l-8.4 8.4" stroke="#000" stroke-width="1.8"/></svg>
<div style="left:862px;top:263px;width:364px;height:20px;background:#fff;border:1px solid #000;"></div>
<div style="left:1177px;top:265px;width:15px;height:16px;background:#f0f0f0;"></div>
<div style="left:1194px;top:265px;width:14px;height:16px;background:#f0f0f0;"></div>
<div style="left:1210px;top:265px;width:14px;height:16px;background:#f0f0f0;"></div>
<svg style="left:1177px;top:265.0px" width="46" height="16" viewBox="0 0 46 16"><path d="M2 8.5h2M6 8.5h2M10 8.5h2" stroke="#000" stroke-width="2"/><circle cx="23" cy="7.2" r="3.4" fill="none" stroke="#000" stroke-width="1.5"/><path d="M25.4 9.8l3 3" stroke="#000" stroke-width="2.2"/><path d="M34.8 3.8l8.4 8.4M43.2 3.8l-8.4 8.4" stroke="#000" stroke-width="1.8"/></svg>
<div style="left:937px;top:288px;width:289px;height:20px;background:#fff;border:1px solid #000;"></div>
<div style="left:1177px;top:290px;width:15px;height:16px;background:#f0f0f0;"></div>
<div style="left:1194px;top:290px;width:14px;height:16px;background:#f0f0f0;"></div>
<div style="left:1210px;top:290px;width:14px;height:16px;background:#f0f0f0;"></div>
<svg style="left:1177px;top:290.0px" width="46" height="16" viewBox="0 0 46 16"><path d="M2 8.5h2M6 8.5h2M10 8.5h2" stroke="#000" stroke-width="2"/><circle cx="23" cy="7.2" r="3.4" fill="none" stroke="#000" stroke-width="1.5"/><path d="M25.4 9.8l3 3" stroke="#000" stroke-width="2.2"/><path d="M34.8 3.8l8.4 8.4M43.2 3.8l-8.4 8.4" stroke="#000" stroke-width="1.8"/></svg>
<div style="left:937px;top:313px;width:289px;height:20px;background:#fff;border:1px solid #000;"></div>
<div style="left:1177px;top:315px;width:15px;height:16px;background:#f0f0f0;"></div>
<div style="left:1194px;top:315px;width:14px;height:16px;background:#f0f0f0;"></div>
<div style="left:1210px;top:315px;width:14px;height:16px;background:#f0f0f0;"></div>
<svg style="left:1177px;top:315.0px" width="46" height="16" viewBox="0 0 46 16"><path d="M2 8.5h2M6 8.5h2M10 8.5h2" stroke="#000" stroke-width="2"/><circle cx="23" cy="7.2" r="3.4" fill="none" stroke="#000" stroke-width="1.5"/><path d="M25.4 9.8l3 3" stroke="#000" stroke-width="2.2"/><path d="M34.8 3.8l8.4 8.4M43.2 3.8l-8.4 8.4" stroke="#000" stroke-width="1.8"/></svg>
<div style="left:862px;top:338px;width:364px;height:20px;background:#fff;border:1px solid #000;"></div>
<div style="left:1177px;top:340px;width:15px;height:16px;background:#f0f0f0;"></div>
<div style="left:1194px;top:340px;width:14px;height:16px;background:#f0f0f0;"></div>
<div style="left:1210px;top:340px;width:14px;height:16px;background:#f0f0f0;"></div>
<svg style="left:1177px;top:340.0px" width="46" height="16" viewBox="0 0 46 16"><path d="M2 8.5h2M6 8.5h2M10 8.5h2" stroke="#000" stroke-width="2"/><circle cx="23" cy="7.2" r="3.4" fill="none" stroke="#000" stroke-width="1.5"/><path d="M25.4 9.8l3 3" stroke="#000" stroke-width="2.2"/><path d="M34.8 3.8l8.4 8.4M43.2 3.8l-8.4 8.4" stroke="#000" stroke-width="1.8"/></svg>
<div style="left:862px;top:363px;width:364px;height:20px;background:#fff;border:1px solid #000;"></div>
<div style="left:1177px;top:365px;width:15px;height:16px;background:#f0f0f0;"></div>
<div style="left:1194px;top:365px;width:14px;height:16px;background:#f0f0f0;"></div>
<div style="left:1210px;top:365px;width:14px;height:16px;background:#f0f0f0;"></div>
<svg style="left:1177px;top:365.0px" width="46" height="16" viewBox="0 0 46 16"><path d="M2 8.5h2M6 8.5h2M10 8.5h2" stroke="#000" stroke-width="2"/><circle cx="23" cy="7.2" r="3.4" fill="none" stroke="#000" stroke-width="1.5"/><path d="M25.4 9.8l3 3" stroke="#000" stroke-width="2.2"/><path d="M34.8 3.8l8.4 8.4M43.2 3.8l-8.4 8.4" stroke="#000" stroke-width="1.8"/></svg>
<div style="left:804px;top:391.5px;width:11px;height:11px;background:#fff;border:1px solid #7a7a7a;"></div>
<svg style="left:804px;top:391.5px" width="11" height="11" viewBox="0 0 11 11"><path d="M2 5.2l2.4 2.6L9 2.8" stroke="#000" stroke-width="2" fill="none"/></svg>
<div style="left:1099px;top:391.5px;width:11px;height:11px;background:#fff;border:1px solid #8e8f8f;"></div>
<div style="left:804px;top:417px;width:11px;height:11px;background:#fff;border:1px solid #8e8f8f;"></div>
<div style="left:1099px;top:417px;width:11px;height:11px;background:#fff;border:1px solid #8e8f8f;"></div>
<div style="left:804px;top:442px;width:11px;height:11px;background:#fff;border:1px solid #7a7a7a;"></div>
<svg style="left:804px;top:442px" width="11" height="11" viewBox="0 0 11 11"><path d="M2 5.2l2.4 2.6L9 2.8" stroke="#000" stroke-width="2" fill="none"/></svg>
<div style="left:1099px;top:442px;width:11px;height:11px;background:#fff;border:1px solid #8e8f8f;"></div>
<div style="left:327px;top:462px;width:904px;height:23px;background:#fff;border-bottom:1px solid #000;"></div>
<div style="left:384px;top:467px;width:1px;height:15px;background:#a8a8a8;"></div>
<div style="left:541px;top:467px;width:1px;height:15px;background:#a8a8a8;"></div>
<div style="left:649px;top:467px;width:1px;height:15px;background:#a8a8a8;"></div>
<div style="left:712px;top:467px;width:1px;height:15px;background:#a8a8a8;"></div>
<div style="left:928px;top:467px;width:1px;height:15px;background:#a8a8a8;"></div>
<div style="left:976px;top:467px;width:1px;height:15px;background:#a8a8a8;"></div>
<div style="left:1069px;top:464px;width:101px;height:21px;background:#f0f0f0;border:1px solid #000;border-bottom:none;"></div>
<div style="left:1199px;top:465px;width:15px;height:15px;background:#fff;border:1px solid #a0a0a0;"></div>
<div style="left:1215px;top:465px;width:15px;height:15px;background:#fff;border:1px solid #a0a0a0;"></div>
<svg style="left:1198px;top:465px" width="32" height="16" viewBox="0 0 32 16"><path d="M11 3v9L6 7.5z" fill="#a0a0a0"/><path d="M22 3v9l5.2-4.5z" fill="#000"/></svg>
<div style="left:339px;top:506px;width:512px;height:62px;background:#fff;border:1px solid #9e9e9e;"></div>
<div style="left:339px;top:586px;width:512px;height:55px;background:#fff;border:1px solid #9e9e9e;"></div>
<div style="left:339px;top:663px;width:512px;height:58px;background:#fff;border:1px solid #000;"></div>
<div style="left:519px;top:730px;width:333px;height:19px;background:#fff;border:1px solid #000;"></div>
<div style="left:803px;top:732px;width:15px;height:15px;background:#f0f0f0;"></div>
<div style="left:820px;top:732px;width:14px;height:15px;background:#f0f0f0;"></div>
<div style="left:836px;top:732px;width:14px;height:15px;background:#f0f0f0;"></div>
<svg style="left:803px;top:731.5px" width="46" height="16" viewBox="0 0 46 16"><path d="M2 8.5h2M6 8.5h2M10 8.5h2" stroke="#000" stroke-width="2"/><circle cx="23" cy="7.2" r="3.4" fill="none" stroke="#000" stroke-width="1.5"/><path d="M25.4 9.8l3 3" stroke="#000" stroke-width="2.2"/><path d="M34.8 3.8l8.4 8.4M43.2 3.8l-8.4 8.4" stroke="#000" stroke-width="1.8"/></svg>
<div style="left:519px;top:758px;width:333px;height:19px;background:#fff;border:1px solid #000;"></div>
<div style="left:803px;top:760px;width:15px;height:15px;background:#f0f0f0;"></div>
<div style="left:820px;top:760px;width:14px;height:15px;background:#f0f0f0;"></div>
<div style="left:836px;top:760px;width:14px;height:15px;background:#f0f0f0;"></div>
<svg style="left:803px;top:759.5px" width="46" height="16" viewBox="0 0 46 16"><path d="M2 8.5h2M6 8.5h2M10 8.5h2" stroke="#000" stroke-width="2"/><circle cx="23" cy="7.2" r="3.4" fill="none" stroke="#000" stroke-width="1.5"/><path d="M25.4 9.8l3 3" stroke="#000" stroke-width="2.2"/><path d="M34.8 3.8l8.4 8.4M43.2 3.8l-8.4 8.4" stroke="#000" stroke-width="1.8"/></svg>
<div style="left:632px;top:786px;width:220px;height:19px;background:#fff;border:1px solid #000;"></div>
<div style="left:803px;top:788px;width:15px;height:15px;background:#f0f0f0;"></div>
<div style="left:820px;top:788px;width:14px;height:15px;background:#f0f0f0;"></div>
<div style="left:836px;top:788px;width:14px;height:15px;background:#f0f0f0;"></div>
<svg style="left:803px;top:787.5px" width="46" height="16" viewBox="0 0 46 16"><path d="M2 8.5h2M6 8.5h2M10 8.5h2" stroke="#000" stroke-width="2"/><circle cx="23" cy="7.2" r="3.4" fill="none" stroke="#000" stroke-width="1.5"/><path d="M25.4 9.8l3 3" stroke="#000" stroke-width="2.2"/><path d="M34.8 3.8l8.4 8.4M43.2 3.8l-8.4 8.4" stroke="#000" stroke-width="1.8"/></svg>
<div style="left:632px;top:814px;width:220px;height:19px;background:#fff;border:1px solid #000;"></div>
<div style="left:803px;top:816px;width:15px;height:15px;background:#f0f0f0;"></div>
<div style="left:820px;top:816px;width:14px;height:15px;background:#f0f0f0;"></div>
<div style="left:836px;top:816px;width:14px;height:15px;background:#f0f0f0;"></div>
<svg style="left:803px;top:815.5px" width="46" height="16" viewBox="0 0 46 16"><path d="M2 8.5h2M6 8.5h2M10 8.5h2" stroke="#000" stroke-width="2"/><circle cx="23" cy="7.2" r="3.4" fill="none" stroke="#000" stroke-width="1.5"/><path d="M25.4 9.8l3 3" stroke="#000" stroke-width="2.2"/><path d="M34.8 3.8l8.4 8.4M43.2 3.8l-8.4 8.4" stroke="#000" stroke-width="1.8"/></svg>
<div style="left:1231px;top:152px;width:17px;height:694px;background:#f7f7f7;"></div>
<div style="left:1231px;top:152px;width:17px;height:17px;background:#f0f0f0;border:1px solid #7a7a7a;"></div>
<svg style="left:1235px;top:157px" width="9" height="6" viewBox="0 0 9 6"><path d="M0 5.5h9L4.5 0.5z" fill="#000"/></svg>
<div style="left:1231px;top:169px;width:17px;height:618px;background:#f0f0f0;border:1px solid #7a7a7a;border-top:2px solid #7a7a7a;"></div>
<div style="left:1231px;top:829px;width:17px;height:17px;background:#f0f0f0;border:1px solid #7a7a7a;"></div>
<svg style="left:1235px;top:835px" width="9" height="6" viewBox="0 0 9 6"><path d="M0 0.5h9L4.5 5.5z" fill="#000"/></svg>
<div style="left:327px;top:846px;width:920px;height:1px;background:#fbfbfb;"></div>
<div style="left:922px;top:849px;width:144px;height:27px;background:#f0f0f0;border:1px solid #6a6a6a;"></div>
<svg style="left:927.5px;top:853px" width="19" height="19" viewBox="0 0 19 19">
<path d="M0.5 1h14.5l3 3v14.5h-17.5z" fill="#2a6ca8"/><rect x="8" y="1" width="6" height="3.6" fill="#fff"/><rect x="10.8" y="1.6" width="1.8" height="2.6" fill="#2a6ca8"/>
<rect x="2.8" y="7" width="13" height="10" fill="#fff"/><path d="M4.5 10.3h4.3V7.9l5.4 4.3-5.4 4.3v-2.4H4.5z" fill="#6aa814"/></svg>
<div style="left:951px;top:867.5px;width:7px;height:1px;background:#000;"></div>
<div style="left:1073px;top:849px;width:89px;height:27px;background:#f0f0f0;border:2px solid #686868;"></div>
<div style="left:1076px;top:852px;width:83px;height:21px;border:1px dotted #000;"></div>
<svg style="left:1078.5px;top:853px" width="19" height="19" viewBox="0 0 19 19">
<path d="M0.5 1h14.5l3 3v14.5h-17.5z" fill="#2a6ca8"/><rect x="8" y="1" width="6" height="3.6" fill="#fff"/><rect x="10.8" y="1.6" width="1.8" height="2.6" fill="#2a6ca8"/>
<rect x="2.8" y="7" width="13" height="10" fill="#fff"/><path d="M4.5 10.3h4.3V7.9l5.4 4.3-5.4 4.3v-2.4H4.5z" fill="#6aa814"/></svg>
<div style="left:1102px;top:867.5px;width:7px;height:1px;background:#000;"></div>
<div style="left:1167px;top:849px;width:76px;height:27px;background:#f0f0f0;border:1px solid #6a6a6a;"></div>
<svg style="left:1171px;top:852px" width="20" height="20" viewBox="0 0 20 20"><path d="M2.5 2.5l15 15M17.5 2.5l-15 15" stroke="#d03a28" stroke-width="4"/></svg>
<div style="left:1195px;top:867.5px;width:6px;height:1px;background:#000;"></div>
<span style="left:350.00px;top:129.00px;font-size:12px;line-height:16px;">Элемент справочника: Биохимический анализ</span>
<span style="left:362.00px;top:161.25px;font-size:11.5px;line-height:15.5px;letter-spacing:-0.435px;">История</span>
<span style="left:452.00px;top:160.25px;font-size:12.5px;line-height:16.5px;letter-spacing:-0.578px;">Код:</span>
<span style="left:489.50px;top:159.25px;font-size:12.5px;line-height:16.5px;letter-spacing:-0.430px;">258</span>
<span style="left:555.00px;top:160.25px;font-size:12.5px;line-height:16.5px;letter-spacing:-0.165px;">Код КДЛ:</span>
<span style="left:805.50px;top:159.75px;font-size:12.5px;line-height:16.5px;letter-spacing:-0.055px;">Лаборатория:</span>
<span style="left:893.00px;top:159.25px;font-size:12.5px;line-height:16.5px;letter-spacing:-0.058px;">Клинико - диагностическая лаборатория</span>
<span style="left:338.00px;top:185.75px;font-size:12.5px;line-height:16.5px;letter-spacing:-0.097px;">Наименование краткое:</span>
<span style="left:489.00px;top:185.25px;font-size:12.5px;line-height:16.5px;letter-spacing:-0.171px;">Биохимический анализ</span>
<span style="left:338.00px;top:204.25px;font-size:12.5px;line-height:16.5px;letter-spacing:-0.065px;">Наименование полное</span>
<span style="left:335.00px;top:221.25px;font-size:12.5px;line-height:16.5px;letter-spacing:-0.171px;">Биохимический анализ</span>
<span style="left:337.00px;top:265.75px;font-size:12.5px;line-height:16.5px;letter-spacing:-0.131px;">Наименование для листа назначений:</span>
<span style="left:337.00px;top:290.75px;font-size:12.5px;line-height:16.5px;letter-spacing:-0.148px;">Вид исследования:</span>
<span style="left:337.00px;top:315.75px;font-size:12.5px;line-height:16.5px;letter-spacing:-0.016px;">Группа:</span>
<span style="left:337.00px;top:341.25px;font-size:12.5px;line-height:16.5px;letter-spacing:-0.119px;">Процедура:</span>
<span style="left:337.00px;top:366.25px;font-size:12.5px;line-height:16.5px;letter-spacing:-0.127px;">Правило назначения как CITO:</span>
<span style="left:529.50px;top:365.25px;font-size:12.5px;line-height:16.5px;letter-spacing:-0.215px;">Системные настройки</span>
<span style="left:337.00px;top:390.25px;font-size:12.5px;line-height:16.5px;letter-spacing:-0.041px;">При назначении 2 и более раз</span>
<span style="left:337.00px;top:404.75px;font-size:12.5px;line-height:16.5px;letter-spacing:-0.139px;">в актуальный срок:</span>
<span style="left:605.00px;top:397.25px;font-size:12.5px;line-height:16.5px;letter-spacing:-0.025px;">Актуальность(дней):</span>
<span style="left:734.50px;top:393.25px;font-size:12.5px;line-height:16.5px;">0</span>
<span style="left:337.00px;top:426.25px;font-size:12.5px;line-height:16.5px;letter-spacing:-0.126px;">DS по умолчанию, если не указан в случае:</span>
<span style="left:599.00px;top:424.75px;font-size:12.5px;line-height:16.5px;letter-spacing:-0.006px;">Z01.7. Лабораторное</span>
<span style="left:803.20px;top:265.75px;font-size:12.5px;line-height:16.5px;letter-spacing:-0.102px;">Услуга:</span>
<span style="left:803.20px;top:291.25px;font-size:12.5px;line-height:16.5px;letter-spacing:-0.075px;">Услуга Федеральная:</span>
<span style="left:803.20px;top:316.25px;font-size:12.5px;line-height:16.5px;letter-spacing:0.097px;">Услуга нетрики:</span>
<span style="left:805.20px;top:341.25px;font-size:12.5px;line-height:16.5px;">Кабинет:</span>
<span style="left:803.20px;top:366.25px;font-size:12.5px;line-height:16.5px;letter-spacing:-0.163px;">Профиль:</span>
<span style="left:820.80px;top:390.25px;font-size:12.5px;line-height:16.5px;letter-spacing:-0.089px;color:#0a8a0a;">Для назначения</span>
<span style="left:1115.80px;top:390.45px;font-size:12.5px;line-height:16.5px;letter-spacing:-0.258px;color:#f50000;">Неактуален</span>
<span style="left:820.80px;top:415.75px;font-size:12.5px;line-height:16.5px;letter-spacing:-0.149px;">Показывать всегда в истории исследований</span>
<div style="left:0;top:0;width:1225px;height:889px;overflow:hidden"><span style="left:1116.00px;top:415.75px;font-size:12.5px;line-height:16.5px;letter-spacing:0.081px;">Выполняется по частям</span></div>
<span style="left:820.80px;top:440.25px;font-size:12.5px;line-height:16.5px;letter-spacing:-0.127px;">Направление в другую организацию</span>
<div style="left:0;top:0;width:1225px;height:889px;overflow:hidden"><span style="left:1116.00px;top:440.25px;font-size:12.5px;line-height:16.5px;letter-spacing:0.067px;">Для других организаций</span></div>
<span style="left:337.00px;top:467.75px;font-size:12.5px;line-height:16.5px;letter-spacing:-0.681px;">Состав</span>
<span style="left:389.50px;top:467.75px;font-size:12.5px;line-height:16.5px;letter-spacing:-0.282px;">Параметры исследования</span>
<span style="left:546.50px;top:467.75px;font-size:12.5px;line-height:16.5px;letter-spacing:-0.229px;">Анализ-родитель</span>
<span style="left:653.50px;top:467.75px;font-size:12.5px;line-height:16.5px;letter-spacing:-0.221px;">Реагенты</span>
<span style="left:717.70px;top:467.75px;font-size:12.5px;line-height:16.5px;letter-spacing:-0.188px;">Анализы не объединяемые в заявку</span>
<span style="left:932.50px;top:467.75px;font-size:12.5px;line-height:16.5px;letter-spacing:-0.091px;">Услуги</span>
<span style="left:980.80px;top:467.75px;font-size:12.5px;line-height:16.5px;letter-spacing:-0.374px;">Биоматериалы</span>
<span style="left:1073.50px;top:467.75px;font-size:12.5px;line-height:16.5px;">Дополнительно</span>
<span style="left:1174.30px;top:467.75px;font-size:12.5px;line-height:16.5px;letter-spacing:-0.662px;">Инт</span>
<span style="left:339.50px;top:490.75px;font-size:12.5px;line-height:16.5px;letter-spacing:-0.127px;">Подготовка:</span>
<span style="left:339.50px;top:571.25px;font-size:12.5px;line-height:16.5px;letter-spacing:-0.082px;">Срок выполнения:</span>
<span style="left:338.00px;top:648.25px;font-size:12.5px;line-height:16.5px;letter-spacing:-0.183px;">Примечание:</span>
<span style="left:338.00px;top:732.25px;font-size:12.5px;line-height:16.5px;letter-spacing:-0.135px;">Печатная форма направления:</span>
<span style="left:338.00px;top:759.35px;font-size:12.5px;line-height:16.5px;letter-spacing:-0.122px;">Печатная форма результата:</span>
<span style="left:338.00px;top:788.25px;font-size:12.5px;line-height:16.5px;letter-spacing:-0.121px;">ПФ результата для генерации PDF организациям:</span>
<span style="left:338.00px;top:816.75px;font-size:12.5px;line-height:16.5px;letter-spacing:-0.134px;">ПФ результата для генерации PDF пациентам:</span>
<span style="left:950.50px;top:854.45px;font-size:11.5px;line-height:15.5px;letter-spacing:-0.200px;">Сохранить и закрыть</span>
<span style="left:1101.50px;top:854.45px;font-size:11.5px;line-height:15.5px;letter-spacing:-0.332px;">Сохранить</span>
<span style="left:1194.50px;top:854.45px;font-size:11.5px;line-height:15.5px;letter-spacing:-0.133px;">Закрыть</span>
</div>
<svg style="left:0;top:0" width="1257" height="889" viewBox="0 0 1257 889">
<circle cx="1008" cy="442" r="18" fill="#d40a0a"/>
<path d="M1008 442L1026.3 439.8L1076.4 474L1018.6 458.2z" fill="#d40a0a"/>
<text x="1008.3" y="447.6" font-family="Liberation Sans, sans-serif" font-size="14.5" fill="#fff" text-anchor="middle">1</text>
</svg>
<div style="left:0px;top:886.6px;width:319px;height:2.4px;background:#fff;"></div>
<div style="left:1256px;top:887px;width:1px;height:2px;background:#fff;"></div>
<div style="left:319px;top:887px;width:938px;height:2px;background:#fff;"></div>
<div style="left:209px;top:887px;width:1px;height:2px;background:#b0b0b0;"></div>
<div style="left:215px;top:887px;width:1px;height:2px;background:#555;"></div>
<div style="left:537px;top:887px;width:1px;height:2px;background:#b0b0b0;"></div>
</div>
</body></html>
